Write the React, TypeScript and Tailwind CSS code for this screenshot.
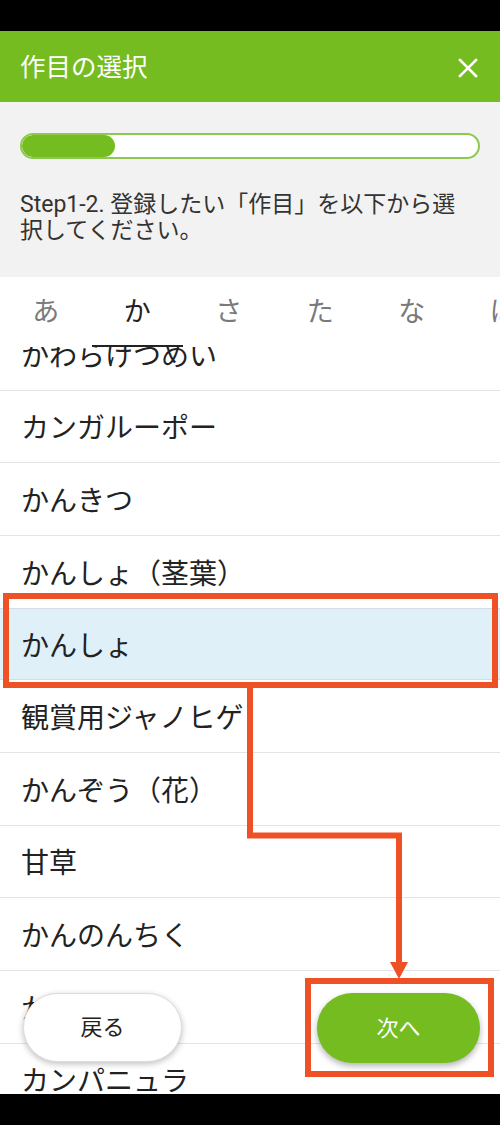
import React from 'react';

// --- DADOS ---
const TABS = ["あ", "か", "さ", "た", "な", "は"];

const CROPS = [
  "かわらけつめい",
  "カンガルーポー",
  "かんきつ",
  "かんしょ（茎葉）",
  "かんしょ",
  "観賞用ジャノヒゲ",
  "かんぞう（花）",
  "甘草",
  "かんのんちく",
  "かんぴょう",
  "カンパニュラ",
];

const SELECTED = "かんしょ";

const FONT = "font-['Roboto','Noto_Sans_CJK_JP',sans-serif]";

// --- COMPONENTE ---
const App = () => {
  return (
    <div className={`relative w-[500px] h-[1125px] flex flex-col bg-white overflow-hidden ${FONT}`}>
      {/* barra de estado */}
      <div className="h-[31px] bg-black shrink-0" />

      {/* cabeçalho */}
      <div className="h-[71px] shrink-0 bg-[#74bc1f] flex items-center justify-between pl-[20px] pr-[22px]">
        <h1 className="text-white text-[25.5px] leading-none pt-[3px]">作目の選択</h1>
        <svg width="20" height="20" viewBox="0 0 20 20" className="mt-[3px]">
          <path d="M2 2 L18 18 M18 2 L2 18" stroke="white" strokeWidth="2.6" strokeLinecap="square" />
        </svg>
      </div>

      {/* progresso + instrução */}
      <div className="h-[175px] shrink-0 bg-[#f2f2f2] px-[20px] pt-[31px]">
        <div className="h-[26px] rounded-full border-2 border-[#8dc84f] bg-white overflow-hidden">
          <div className="h-full w-[93px] rounded-full bg-[#74bc1f]" />
        </div>
        <p className="mt-[33px] text-[23px] leading-[26px] text-[#333]">
          <span className="block whitespace-nowrap">Step1-2. 登録したい「作目」を以下から選</span>
          <span className="block whitespace-nowrap">択してください。</span>
        </p>
      </div>

      {/* separadores */}
      <div className="h-[70px] shrink-0 flex overflow-hidden">
        {TABS.map((t, i) => (
          <div
            key={t}
            className={`w-[91.5px] shrink-0 flex items-center justify-center text-[27px] ${
              i === 1 ? "text-[#222] border-b-2 border-[#222] pt-[2px]" : "text-[#7a7a7a]"
            }`}
          >
            {t}
          </div>
        ))}
      </div>

      {/* lista */}
      <div className="flex-1 overflow-hidden">
        <div className="-mt-[29px]">
          {CROPS.map((c) => (
            <div
              key={c}
              className={`h-[72.67px] flex items-center pl-[21px] pt-[6px] border-b border-[#e4e4e4] text-[28px] text-[#222] ${
                c === SELECTED ? "bg-[#dff0f9] border-t border-t-[#d6dde4] -mt-px border-b-[#d6dde4]" : ""
              }`}
            >
              {c}
            </div>
          ))}
        </div>
      </div>

      {/* barra inferior */}
      <div className="h-[31px] bg-black shrink-0" />

      {/* botões flutuantes */}
      <button className="absolute left-[23px] top-[993px] w-[159px] h-[69px] rounded-full bg-white border border-[#dcdcdc] shadow-[0_2px_6px_rgba(0,0,0,0.25)] text-[22px] text-[#222]">
        戻る
      </button>
      <button className="absolute left-[317px] top-[993px] w-[163px] h-[70px] rounded-full bg-[#74bc1f] shadow-[0_3px_6px_rgba(0,0,0,0.3)] text-[22px] text-white">
        次へ
      </button>

      {/* anotações */}
      <div className="absolute left-[3px] top-[593px] w-[495px] h-[95px] border-[6px] border-[#ef5127] pointer-events-none" />
      <div className="absolute left-[305px] top-[978px] w-[189px] h-[99px] border-[6px] border-[#ef5127] pointer-events-none" />
      <svg className="absolute left-0 top-0 pointer-events-none" width="500" height="1125">
        <path d="M250 688 V835.5 H399 V964" fill="none" stroke="#ef5127" strokeWidth="6" />
        <path d="M390 962 H408 L399 979 Z" fill="#ef5127" />
      </svg>
    </div>
  );
};

export default App;
